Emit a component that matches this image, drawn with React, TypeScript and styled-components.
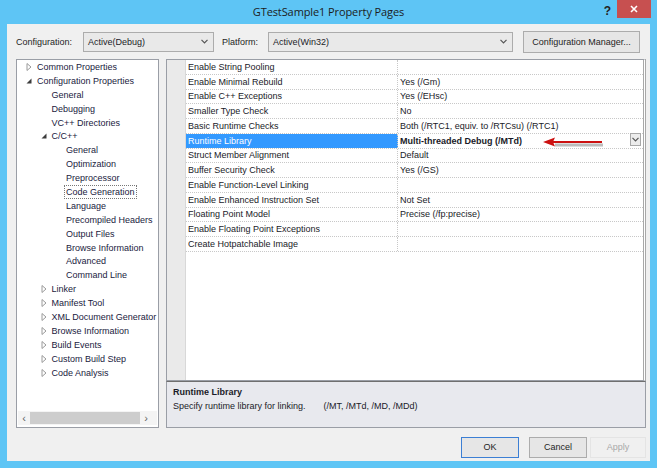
import React from "react";
import styled, { createGlobalStyle } from "styled-components";

const GlobalStyle = createGlobalStyle`
  html, body {
    margin: 0;
    padding: 0;
    background: #5ec5f5;
  }
  body {
    font-family: "Liberation Sans", Arial, sans-serif;
    font-size: 9px;
    color: #1c1c28;
  }
`;

type TreeItem = {
  label: string;
  level: number;
  expander?: "open" | "closed";
  focused?: boolean;
};

const treeItems: TreeItem[] = [
  { label: "Common Properties", level: 0, expander: "closed" },
  { label: "Configuration Properties", level: 0, expander: "open" },
  { label: "General", level: 1 },
  { label: "Debugging", level: 1 },
  { label: "VC++ Directories", level: 1 },
  { label: "C/C++", level: 1, expander: "open" },
  { label: "General", level: 2 },
  { label: "Optimization", level: 2 },
  { label: "Preprocessor", level: 2 },
  { label: "Code Generation", level: 2, focused: true },
  { label: "Language", level: 2 },
  { label: "Precompiled Headers", level: 2 },
  { label: "Output Files", level: 2 },
  { label: "Browse Information", level: 2 },
  { label: "Advanced", level: 2 },
  { label: "Command Line", level: 2 },
  { label: "Linker", level: 1, expander: "closed" },
  { label: "Manifest Tool", level: 1, expander: "closed" },
  { label: "XML Document Generator", level: 1, expander: "closed" },
  { label: "Browse Information", level: 1, expander: "closed" },
  { label: "Build Events", level: 1, expander: "closed" },
  { label: "Custom Build Step", level: 1, expander: "closed" },
  { label: "Code Analysis", level: 1, expander: "closed" },
];

type Prop = { name: string; value: string; selected?: boolean };

const props: Prop[] = [
  { name: "Enable String Pooling", value: "" },
  { name: "Enable Minimal Rebuild", value: "Yes (/Gm)" },
  { name: "Enable C++ Exceptions", value: "Yes (/EHsc)" },
  { name: "Smaller Type Check", value: "No" },
  { name: "Basic Runtime Checks", value: "Both (/RTC1, equiv. to /RTCsu) (/RTC1)" },
  { name: "Runtime Library", value: "Multi-threaded Debug (/MTd)", selected: true },
  { name: "Struct Member Alignment", value: "Default" },
  { name: "Buffer Security Check", value: "Yes (/GS)" },
  { name: "Enable Function-Level Linking", value: "" },
  { name: "Enable Enhanced Instruction Set", value: "Not Set" },
  { name: "Floating Point Model", value: "Precise (/fp:precise)" },
  { name: "Enable Floating Point Exceptions", value: "" },
  { name: "Create Hotpatchable Image", value: "" },
];

function Chevron() {
  return (
    <svg width="7" height="5" viewBox="0 0 7 5">
      <path d="M0.5 0.8 L3.5 3.8 L6.5 0.8" fill="none" stroke="#555" strokeWidth="1.2" />
    </svg>
  );
}

function Expander({ kind }: { kind: "open" | "closed" }) {
  return (
    <ExpanderBox>
      {kind === "open" ? (
        <svg width="6" height="6" viewBox="0 0 6 6">
          <path d="M5.5 0.5 L5.5 5.5 L0.5 5.5 Z" fill="#3c3c3c" />
        </svg>
      ) : (
        <svg width="6" height="8" viewBox="0 0 6 8">
          <path d="M1 0.5 L5 4 L1 7.5 Z" fill="none" stroke="#9a9a9a" strokeWidth="1" />
        </svg>
      )}
    </ExpanderBox>
  );
}

export default function App() {
  return (
    <>
      <GlobalStyle />
      <Window>
        <TitleBar>
          <span />
          <Title>GTestSample1 Property Pages</Title>
          <TitleControls>
            <HelpGlyph>?</HelpGlyph>
            <CloseButton>
              <svg width="8" height="8" viewBox="0 0 8 8">
                <path d="M1 1 L7 7 M7 1 L1 7" stroke="#fff" strokeWidth="1.6" />
              </svg>
            </CloseButton>
          </TitleControls>
        </TitleBar>

        <Body>
          <ConfigRow>
            <Label $width={67}>Configuration:</Label>
            <Combo $width={131}>
              <span>Active(Debug)</span>
              <Chevron />
            </Combo>
            <Label $width={46} $gap={8}>
              Platform:
            </Label>
            <Combo $width={245}>
              <span>Active(Win32)</span>
              <Chevron />
            </Combo>
            <PushButton $width={117} $height={22} $ml={10}>
              Configuration Manager...
            </PushButton>
          </ConfigRow>

          <Main>
            <TreePanel>
              <TreeList>
                {treeItems.map((t, i) => (
                  <TreeRow key={i} $level={t.level}>
                    {t.expander && <Expander kind={t.expander} />}
                    <TreeLabel $focused={t.focused}>{t.label}</TreeLabel>
                  </TreeRow>
                ))}
              </TreeList>
              <HScroll>
                <ScrollArrow>‹</ScrollArrow>
                <ScrollThumb />
                <ScrollArrow>›</ScrollArrow>
              </HScroll>
            </TreePanel>

            <RightColumn>
              <Grid>
                <Gutter />
                <Rows>
                  {props.map((p, i) => (
                    <PropRow key={i}>
                      <PropName $selected={p.selected}>{p.name}</PropName>
                      <PropValue $bold={p.selected}>
                        {p.value}
                        {p.selected && (
                          <DropButton>
                            <Chevron />
                          </DropButton>
                        )}
                      </PropValue>
                    </PropRow>
                  ))}
                </Rows>
                <Arrow width="64" height="12" viewBox="0 0 64 12">
                  <line x1="12" y1="8" x2="60" y2="8" stroke="#bcbcbc" strokeWidth="3" />
                  <line x1="9" y1="5" x2="59" y2="5" stroke="#cc1111" strokeWidth="2.2" />
                  <path d="M0 5 L12 0.5 L10 5 L12 9.5 Z" fill="#cc1111" />
                </Arrow>
              </Grid>
              <Description>
                <DescTitle>Runtime Library</DescTitle>
                <DescText>
                  <span>Specify runtime library for linking.</span>
                  <DescFlags>(/MT, /MTd, /MD, /MDd)</DescFlags>
                </DescText>
              </Description>
            </RightColumn>
          </Main>

          <Footer>
            <PushButton $width={58} $height={21} $default>
              OK
            </PushButton>
            <PushButton $width={58} $height={21} $ml={10}>
              Cancel
            </PushButton>
            <PushButton $width={56} $height={21} $ml={3} $disabled>
              Apply
            </PushButton>
          </Footer>
        </Body>
      </Window>
    </>
  );
}

const Window = styled.div`
  width: 657px;
  height: 468px;
  box-sizing: border-box;
  background: #5ec5f5;
  display: flex;
  flex-direction: column;
  overflow: hidden;
`;

const TitleBar = styled.div`
  height: 24px;
  display: grid;
  grid-template-columns: 1fr auto 1fr;
  align-items: start;
`;

const Title = styled.div`
  font-family: "Open Sans", "Noto Sans", sans-serif;
  font-size: 11px;
  color: #1c1c1c;
  padding-top: 4px;
  letter-spacing: -0.1px;
`;

const TitleControls = styled.div`
  display: flex;
  justify-content: flex-end;
  align-items: flex-start;
  padding-right: 6px;
`;

const HelpGlyph = styled.span`
  font-family: "Liberation Sans", sans-serif;
  font-weight: bold;
  font-size: 12px;
  color: #222;
  margin-top: 4px;
  margin-right: 6px;
`;

const CloseButton = styled.div`
  width: 34px;
  height: 18px;
  background: #c75050;
  display: flex;
  align-items: center;
  justify-content: center;
`;

const Body = styled.div`
  flex: 1;
  margin: 0 7px 7px 7px;
  background: #f0f0f0;
  padding: 0 4px 0 9px;
  display: flex;
  flex-direction: column;
`;

const ConfigRow = styled.div`
  height: 35px;
  display: flex;
  align-items: center;
`;

const Label = styled.span<{ $width: number; $gap?: number }>`
  width: ${(p) => p.$width}px;
  flex-shrink: 0;
  margin-left: ${(p) => p.$gap || 0}px;
  color: #1e1e1e;
  white-space: nowrap;
`;

const Combo = styled.div<{ $width: number }>`
  width: ${(p) => p.$width}px;
  flex-shrink: 0;
  height: 20px;
  box-sizing: border-box;
  border: 1px solid #acacac;
  background: #e9e9e9;
  display: flex;
  align-items: center;
  justify-content: space-between;
  padding: 0 5px 0 4px;
`;

const PushButton = styled.div<{
  $width: number;
  $height: number;
  $ml?: number;
  $default?: boolean;
  $disabled?: boolean;
}>`
  width: ${(p) => p.$width}px;
  height: ${(p) => p.$height}px;
  margin-left: ${(p) => p.$ml || 0}px;
  box-sizing: border-box;
  border: 1px solid
    ${(p) => (p.$default ? "#3c7fd4" : p.$disabled ? "#e4e4e4" : "#acacac")};
  background: ${(p) => (p.$disabled ? "#f0f0f0" : "#e6e6e6")};
  color: ${(p) => (p.$disabled ? "#a8a8a8" : "#1e1e1e")};
  display: flex;
  align-items: center;
  justify-content: center;
  white-space: nowrap;
  flex-shrink: 0;
`;

const Main = styled.div`
  height: 369px;
  display: flex;
  gap: 7px;
`;

const TreePanel = styled.div`
  width: 143px;
  box-sizing: border-box;
  border: 1px solid #9a9ea6;
  background: #fff;
  display: flex;
  flex-direction: column;
`;

const TreeList = styled.div`
  flex: 1;
  overflow: hidden;
`;

const TreeRow = styled.div<{ $level: number }>`
  height: 13.9px;
  position: relative;
  display: flex;
  align-items: center;
  padding-left: ${(p) => 19 + p.$level * 14.5}px;
  white-space: nowrap;
  color: #1a1a40;
`;

const ExpanderBox = styled.span`
  position: absolute;
  margin-left: -11px;
  width: 8px;
  display: flex;
  justify-content: center;
`;

const TreeLabel = styled.span<{ $focused?: boolean }>`
  padding: 0 1px;
  line-height: 12px;
  outline: ${(p) => (p.$focused ? "1px dotted #777" : "none")};
`;

const HScroll = styled.div`
  height: 14px;
  margin: 0 1px 2px 1px;
  display: flex;
  align-items: center;
  background: #f4f4f4;
`;

const ScrollArrow = styled.span`
  width: 12px;
  text-align: center;
  color: #666;
  font-size: 11px;
`;

const ScrollThumb = styled.div`
  width: 110px;
  height: 12px;
  background: #cdcdcd;
`;

const RightColumn = styled.div`
  flex: 1;
  display: flex;
  flex-direction: column;
`;

const Grid = styled.div`
  flex: 1;
  position: relative;
  display: flex;
  border: 1px solid #9a9ea6;
  border-right: 3px double #a8a8a8;
  background: #fff;
`;

const Gutter = styled.div`
  width: 18px;
  background: #eaeaea;
  border-right: 1px solid #d8d8d8;
`;

const Rows = styled.div`
  flex: 1;
`;

const PropRow = styled.div`
  height: 14.75px;
  box-sizing: border-box;
  display: grid;
  grid-template-columns: 214px 1fr;
  border-bottom: 1px dotted #c8c8c8;
`;

const PropName = styled.div<{ $selected?: boolean }>`
  padding-left: 2px;
  display: flex;
  align-items: center;
  white-space: nowrap;
  background: ${(p) => (p.$selected ? "#3399ff" : "transparent")};
  color: ${(p) => (p.$selected ? "#fff" : "#1a1a28")};
  border-right: 1px dotted #c8c8c8;
  margin-right: 2px;
`;

const PropValue = styled.div<{ $bold?: boolean }>`
  position: relative;
  display: flex;
  align-items: center;
  white-space: nowrap;
  font-weight: ${(p) => (p.$bold ? "bold" : "normal")};
  color: #1a1a28;
`;

const DropButton = styled.div`
  position: absolute;
  right: 2px;
  top: -1px;
  width: 11px;
  height: 13px;
  box-sizing: border-box;
  border: 1px solid #a8a8a8;
  background: #ececec;
  display: flex;
  align-items: center;
  justify-content: center;
`;

const Arrow = styled.svg`
  position: absolute;
  left: 376px;
  top: 77px;
`;

const Description = styled.div`
  height: 47px;
  box-sizing: border-box;
  border: 1px solid #9a9ea6;
  border-top-color: #6f6f6f;
  background: #e8e9ee;
  padding: 5px 6px;
`;

const DescTitle = styled.div`
  font-weight: bold;
  color: #1a1a28;
  margin-bottom: 4px;
`;

const DescText = styled.div`
  display: flex;
  color: #1a1a28;
`;

const DescFlags = styled.span`
  margin-left: 18px;
`;

const Footer = styled.div`
  flex: 1;
  display: flex;
  justify-content: flex-end;
  align-items: center;
  padding-top: 5px;
  padding-right: 0px;
`;
